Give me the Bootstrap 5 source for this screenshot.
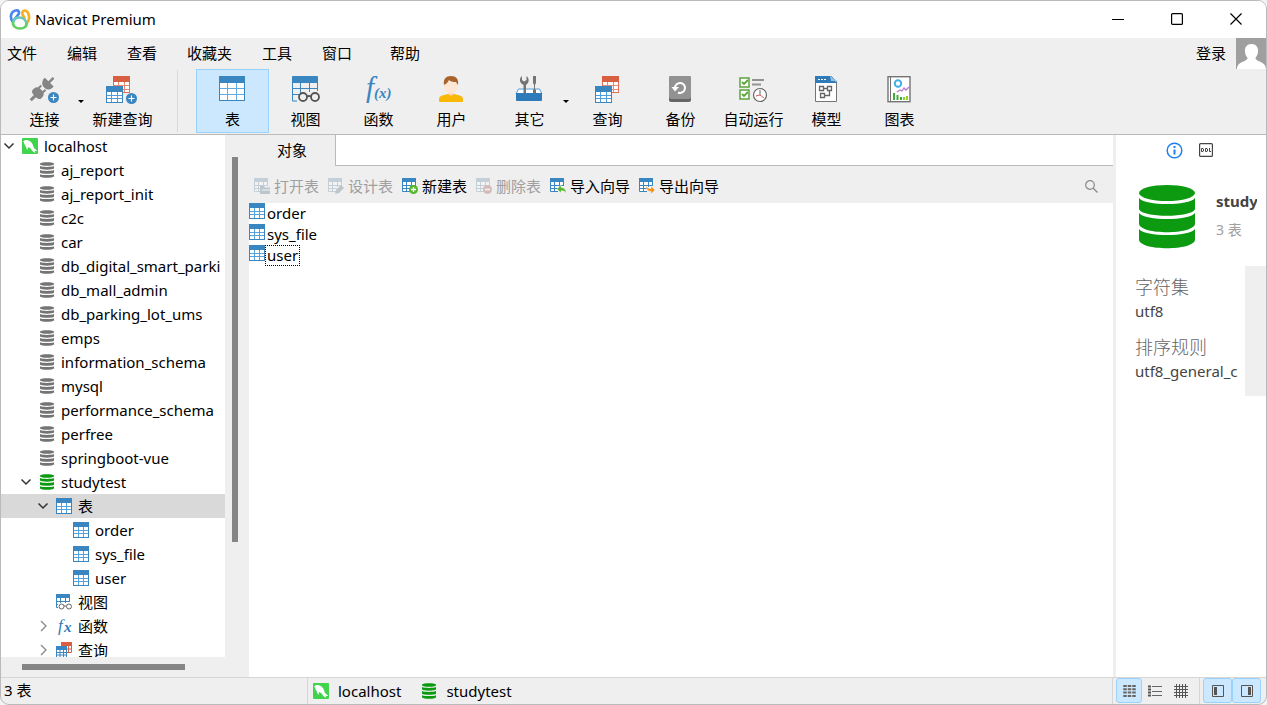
<!DOCTYPE html>
<html lang="zh-CN">
<head>
<meta charset="utf-8">
<meta name="viewport" content="width=device-width, initial-scale=1">
<title>Navicat Premium</title>
<link href="https://cdn.jsdelivr.net/npm/bootstrap@5.3.0/dist/css/bootstrap.min.css" rel="stylesheet">
<style>
  :root { --chrome: #efefef; --line: #bababa; --soft: #d6d6d6; --pick: #cce8ff; --pick-line: #99d1ff; --thumb: #858585; }
  body { font: 15px/24px "Noto Sans", "Noto Sans CJK SC", sans-serif; color: #000; background: #f3f3f3; }
  svg { display: block; flex: none; }
  a { color: inherit; text-decoration: none; }
  button { border: 0; background: none; padding: 0; color: inherit; font: inherit; line-height: inherit; }
  .window { border: 1px solid var(--line); border-radius: 9px; background: var(--chrome); }
  .titlebar { height: 37px; background: #fff; padding: 0 1px 1px 8px; }
  .brand { gap: 4px; }
  .caption-btn { width: 59px; }
  .menubar { height: 31px; padding-left: 6px; }
  .menu-items { gap: 30px; }
  .menubar a { padding-bottom: 2px; }
  .avatar { width: 30px; height: 31px; background: #9f9f9f; }
  .login { margin-right: 10px; }
  .tools { height: 66px; border-bottom: 1px solid var(--line); }
  .tool { width: 73px; height: 64px; padding-top: 6px; border: 1px solid transparent; display: flex; flex-direction: column; align-items: center; gap: 3px; line-height: 24px; white-space: nowrap; }
  .tool svg { margin-right: 1px; overflow: visible; }
  .tool.active { background: var(--pick); border-color: var(--pick-line); }
  .tool.with-menu { width: 83px; position: relative; }
  .tool.with-menu::after { content: ""; position: absolute; right: 1px; top: 30px; border: 3px solid transparent; border-top-color: #000; border-bottom: 0; }
  .tool-first { margin-left: 2px; }
  .tool-rule { width: 1px; margin: 1px 18px 2px; background: #d8d8d8; }
  .work, .work-row { min-height: 0; }
  .pane { min-width: 0; }
  .side { width: 248px; }
  .tree { background: #fff; width: 224px; }
  .tree-rows { margin-top: -1px; }
  .node { height: 24px; padding-left: calc(var(--depth) * 17px); white-space: nowrap; }
  .node.active { background: #d9d9d9; }
  .twist { width: 21px; padding-left: 2px; flex: none; }
  .node .glyph { margin-right: 6px; overflow: visible; }
  .v-track { padding: 22px 0 0 7px; width: 24px; }
  .v-thumb { width: 6px; background: var(--thumb); height: 77%; }
  .h-track { height: 20px; padding: 7px 0 0 21px; }
  .h-thumb { width: 163px; height: 6px; background: var(--thumb); }
  .tabs { height: 31px; }
  .tab { width: 86px; line-height: 31px; }
  .tab-rest { background: #fff; border-left: 1px solid var(--line); border-bottom: 1px solid var(--line); }
  .actions { height: 37px; padding: 3px 14px 0 5px; gap: 9px; }
  .action { gap: 4px; white-space: nowrap; }
  .action:disabled { color: #a0a0a0; }
  .action:disabled svg { filter: saturate(.5); opacity: .28; }
  .objects { background: #fff; }
  .object { height: 21px; line-height: 21px; }
  .object .name { padding: 0 1px; border: 1px solid transparent; line-height: 19px; }
  .object .name.focused { border: 1px dotted #000; }
  .info { width: 153px; background: #fff; border-left: 3px solid var(--chrome); }
  .info-tabs { padding: 7px 0 0 50px; gap: 16px; height: 31px; }
  .info-head { padding: 19px 9px 0 23px; gap: 21px; height: 100px; }
  .info-text { min-width: 0; padding-top: 4px; }
  .info-name { font-weight: 700; color: #444; }
  .info-count { color: #a0a0a0; font-size: 14px; padding-top: 5px; }
  .props { min-width: 0; padding: 7px 9px 0 19px; color: #444; }
  .props dt { font: 300 18px/26px "Noto Sans CJK SC", sans-serif; color: #666; }
  .props dd { margin-bottom: 10px; }
  .props-bar { width: 21px; height: 130px; background: var(--chrome); }
  .status { height: 27px; border-top: 1px solid var(--soft); }
  .status-count { width: 307px; padding-left: 3px; border-right: 1px solid var(--soft); }
  .status-items { padding-left: 5px; gap: 20px; }
  .status-item { gap: 9px; }
  .status-end { border-left: 1px solid var(--soft); padding-left: 3px; }
  .view-btn { width: 26px; height: 25px; display: flex; align-items: center; justify-content: center; border: 1px solid transparent; border-radius: 3px; }
  .view-btn.wide { width: 29px; }
  .view-btn.active { background: var(--pick); border-color: var(--pick-line); }
  .pane-btns { border-left: 1px solid var(--soft); margin-left: 5px; padding: 0 5px 0 3px; }
</style>
</head>
<body>
<svg width="0" height="0" class="position-absolute">
  <symbol id="table" viewBox="0 0 26 25">
    <rect x=".5" y=".5" width="25" height="24" fill="#fff" stroke="#3a86c0"/>
    <path d="M1 12.500h24M1 18.500h24M8.500 6v18M17.500 6v18" stroke="#62aadf" fill="none"/>
    <path d="M0 1q0-1 1-1h24q1 0 1 1v6H0z" fill="#3a86c0"/>
  </symbol>
  <symbol id="table-sm" viewBox="0 0 16 16">
    <rect x=".5" y=".5" width="15" height="15" fill="#fff" stroke="#3a86c0"/>
    <path d="M1 8.500h14M1 11.500h14M5.500 5v10M10.500 5v10" stroke="#55a2dc" fill="none"/>
    <path d="M0 0h16v5H0z" fill="#3a86c0"/>
  </symbol>
  <symbol id="table-cut" viewBox="0 0 16 16">
    <path d="M.5.5h13v13H.5z" fill="#fff"/>
    <path d="M.5 3v10.500H8M4.500 4v10M9.500 4v5M1 7.500h13M1 10.500h8M13.500 4v4" stroke="#3a86c0" fill="none"/>
    <path d="M0 0h14v4H0z" fill="#3a86c0"/>
  </symbol>
  <symbol id="db" viewBox="0 0 16 16">
    <path d="M1 1.500C2.500-.2 13.500-.2 15 1.500v1c-1.500 1.700-12.500 1.700-14 0zM1 4c3 1.200 11 1.200 14 0v2.600c-1.500 1.500-12.500 1.500-14 0zM1 8.100c3 1.200 11 1.200 14 0v2.600c-1.500 1.500-12.500 1.500-14 0zM1 12.200c3 1.200 11 1.200 14 0v2.300c-1.500 1.800-12.500 1.800-14 0z" fill="currentColor"/>
  </symbol>
  <symbol id="host" viewBox="0 0 16 16">
    <rect width="16" height="16" rx="1" fill="#3fd44c"/>
    <path d="M2.500 2.500c2-1 5 0 6.500 1.500 2 1.800 2.200 4 3 6l3.500 3-3-.3 1 2c-2-.5-3.500-1.700-4.500-3.700C8.300 10 7 9.500 6 9l-.5 3C4 10.500 4.200 8.500 3 7 2 6 2.500 4.500 1 3.500z" fill="#fff"/>
  </symbol>
  <symbol id="down" viewBox="0 0 12 12"><path d="M1.500 3.500 6 8l4.500-4.500" fill="none" stroke="#333" stroke-width="1.500"/></symbol>
  <symbol id="right" viewBox="0 0 12 12"><path d="M4 1l5 5-5 5" fill="none" stroke="#888" stroke-width="1.300"/></symbol>
  <symbol id="query" viewBox="0 0 26 28">
    <rect x="7.500" y=".5" width="16" height="16" fill="#fff" stroke="#e07058"/>
    <path d="M8 9.500h15M8 13.500h15M12.500 6v10M18.500 6v10" stroke="#e58b75" fill="none"/>
    <path d="M7 0h17v6H7z" fill="#d95f43"/>
    <rect x=".5" y="11.500" width="16" height="15" fill="#fff" stroke="#3a86c0"/>
    <path d="M1 19.500h15M1 22.500h15M5.500 16v10M11.500 16v10" stroke="#4f9edb" fill="none"/>
    <path d="M0 10h17v6H0z" fill="#3a86c0"/>
  </symbol>
  <symbol id="query-sm" viewBox="0 0 16 16">
    <path d="M5.500.5h10v10h-10z" fill="#fff" stroke="#d95f43"/>
    <path d="M5 0h11v4H5zM11 6.500h5v1h-5z" fill="#d95f43"/><path d="M12.500 4v6" stroke="#d95f43"/>
    <path d="M.5 5.500h10v10H.5z" fill="#fff" stroke="#3a86c0"/>
    <path d="M0 4h11v4H0z" fill="#3a86c0"/><path d="M1 10.500h9M1 13h9M4 8v7M7.500 8v7" stroke="#3a86c0"/>
  </symbol>
  <symbol id="plus" viewBox="0 0 11 11">
    <circle cx="5.500" cy="5.500" r="5.500" fill="#3a86c0"/><path d="M5.500 2.500v6M2.500 5.500h6" stroke="#fff" stroke-width="1.200"/>
  </symbol>
</svg>

<div class="window vh-100 d-flex flex-column overflow-hidden">
  <header class="titlebar d-flex align-items-stretch flex-shrink-0">
    <div class="brand d-flex align-items-center flex-grow-1">
      <svg width="22" height="22" viewBox="0 0 22 22" fill="none" stroke-width="2.600" stroke-linecap="round">
        <path d="M3.500 13.500C.5 9 2 3.500 6.500 2.500c4-.8 4.500 2.500 2 5L5 12" stroke="#4a86f0"/>
        <path d="M17.500 15.500c3.500-3 3.500-9.500 0-12.500-3-1-5 .5-4 3.500l2 3.500" stroke="#f6b022"/>
        <path d="M4.500 13C2.500 18 7 20.500 11 20.500s8-2 6-7" stroke="#62cf62"/>
        <path d="M4.500 13c1.500-4.500 9.500-5 12.500.5" stroke="#6cc6c0"/>
      </svg>
      <span>Navicat Premium</span>
    </div>
    <button class="caption-btn d-flex align-items-center justify-content-center" aria-label="最小化"><svg width="12" height="12"><path d="M0 6.500h12" stroke="#000"/></svg></button>
    <button class="caption-btn d-flex align-items-center justify-content-center" aria-label="最大化"><svg width="12" height="12"><rect x=".6" y=".6" width="10.800" height="10.800" rx="1" fill="none" stroke="#000" stroke-width="1.200"/></svg></button>
    <button class="caption-btn d-flex align-items-center justify-content-center" aria-label="关闭"><svg width="12" height="12"><path d="M.5.5l11 11M11.500.5l-11 11" stroke="#000" stroke-width="1.200"/></svg></button>
  </header>

  <nav class="menubar d-flex align-items-center flex-shrink-0">
    <div class="menu-items d-flex flex-grow-1">
      <a href="#">文件</a><a href="#">编辑</a><a href="#">查看</a><a href="#">收藏夹</a><a href="#">工具</a><a href="#">窗口</a><a href="#" class="ms-2">帮助</a>
    </div>
    <a href="#" class="login">登录</a>
    <svg class="avatar" viewBox="0 0 30 31"><path d="M15.500 6c4.500 0 7 3 6.500 8-.3 3-1.500 4.500-2.500 6 0 4 10.500 3 10.500 11H1c0-8 10.500-7 10.500-11-1-1.500-2.300-3-2.500-6-.5-5 2-8 6.500-8z" fill="#fff"/></svg>
  </nav>

  <div class="tools d-flex flex-shrink-0" role="toolbar">
    <button class="tool with-menu tool-first">
      <svg width="32" height="28" viewBox="0 0 32 28"><g fill="#858585" transform="rotate(45 14 13)"><path d="M13-3h2.500v6H13zM8 3h12.500v2q-1 5.500-6 5.500T8 5zM8 19c0-4 2-5 6-5s6 1 6 5v2q-1 2-4.500 2v6h-3v-6Q9 23 8 21zM10 11h2v4h-2zM16 11h2v4h-2z"/></g><use href="#plus" x="20" y="16" width="11" height="11"/></svg>
      <span>连接</span></button>
    <button class="tool">
      <svg width="32" height="28"><use href="#query" width="26" height="28"/><use href="#plus" x="20" y="17" width="11" height="11"/></svg>
      <span>新建查询</span></button>
    <div class="tool-rule"></div>
    <button class="tool active"><svg width="26" height="28"><use href="#table" width="26" height="25"/></svg><span>表</span></button>
    <button class="tool"><svg width="28" height="28"><path d="M1.500 3v22H6M1 12.500h26M1 18.500h8M9.500 6v12M18.500 6v10M26.500 3v12" stroke="#3a86c0" fill="none"/><path d="M1 1q0-1 1-1h24q1 0 1 1v6H1z" fill="#3a86c0"/><g fill="#efefef" stroke="#555" stroke-width="1.800"><circle cx="12" cy="21" r="4"/><circle cx="24" cy="21" r="4"/><path d="M16 20.500q2-1 4 0"/></g></svg><span>视图</span></button>
    <button class="tool"><svg width="28" height="28" fill="#3a86c0" font-family="Liberation Serif" font-style="italic"><text x="2" y="21" font-size="29">f</text><text x="10" y="22" font-size="15" font-weight="bold">(x)</text></svg><span>函数</span></button>
    <button class="tool"><svg width="26" height="28"><path d="M10 13h6v5c3 1 9 1 9 5v2q0 1-1 1H2q-1 0-1-1v-2c0-4 6-4 9-5z" fill="#f8b804"/><path d="M10 13h6v5q-3 3-6 0z" fill="#fbd7bd"/><ellipse cx="13" cy="9.500" rx="7" ry="8" fill="#fde6d3"/><path d="M6 9C5 3 8 0 13 0s8 3 7 9l-2-3q-5 0-7-2-1 3-5 5z" fill="#a8642b"/></svg><span>用户</span></button>
    <button class="tool with-menu"><svg width="28" height="28"><path d="M3.500 13h21l2.500 5H1z" fill="#fff" stroke="#4f9edb"/><path d="M8.500 9C4 7 4 2 7 0v4l2 1.500L11.500 4V0c3 2 3 7-.5 9v9H8.500z" fill="#747474"/><path d="M18 0h3v7l-1 2v4l1 1v4h-3v-4l1-1V9l-1-2z" fill="#747474"/><path d="M1 17h26v7q0 1-1 1H2q-1 0-1-1z" fill="#2f7bb9"/></svg><span>其它</span></button>
    <button class="tool"><svg width="24" height="28"><use href="#query" width="26" height="28"/></svg><span>查询</span></button>
    <button class="tool"><svg width="22" height="28"><rect width="22" height="26" rx="2" fill="#666"/><rect width="22" height="23" rx="2" fill="#929292"/><path d="M6 12a5 5 0 1 1 3 4.500" fill="none" stroke="#fff" stroke-width="2"/><path d="M2.500 11h7.500l-4 4.500z" fill="#fff"/></svg><span>备份</span></button>
    <button class="tool"><svg width="28" height="28" fill="none"><path d="M1 2h9v9H1zM1 14h9v9H1z" fill="#fff" stroke="#5ea43c" stroke-width="1.500"/><path d="M3 6l2 2 4-4M3 18l2 2 4-4" stroke="#5ea43c" stroke-width="1.800"/><path d="M13 4h12M13 8.500h9" stroke="#929292" stroke-width="2"/><circle cx="21" cy="19" r="6.500" fill="#fff" stroke="#666" stroke-width="1.200"/><path d="M21 19l4 3M21 19l-4 1" stroke="#d65b50"/><path d="M21 14v5" stroke="#666"/></svg><span>自动运行</span></button>
    <button class="tool"><svg width="22" height="28"><path d="M.5.5h16l5 5v20H.5z" fill="#fff" stroke="#747474"/><path d="M0 0h15l7 7H0z" fill="#2f7bb9"/><path d="M15 0l7 5h-6z" fill="#8fc3ea"/><path d="M3 3.500h2M6 3.500h2M9 3.500h2" stroke="#fff"/><path d="M4.500 10.500h4v4h-4zM12.500 10.500h4v4h-4zM5.500 17.500h4v4h-4zM8.500 12.500h4M14.500 15v4.500h-5" fill="none" stroke="#666" stroke-width="1.300"/></svg><span>模型</span></button>
    <button class="tool"><svg width="24" height="28" fill="none"><rect x="1" y=".7" width="22" height="25" fill="#fff" stroke="#747474" stroke-width="1.400"/><path d="M3.500 1v24" stroke="#747474"/><circle cx="11" cy="7.500" r="3.200" stroke="#42b0e4" stroke-width="2"/><path d="M10 16l3-2 2 1 2-3 2 2 3-3" stroke="#b878d0" stroke-width="1.300"/><path d="M7 17v7M10.500 19v5M14 21v3" stroke="#3eac3d" stroke-width="2"/><path d="M17 21v3M20 20v4" stroke="#8cd42e" stroke-width="2"/></svg><span>图表</span></button>
  </div>

  <div class="work d-flex flex-grow-1">
    <aside class="side d-flex flex-column flex-shrink-0">
      <div class="work-row d-flex flex-grow-1">
        <div class="tree overflow-hidden"><div class="tree-rows" id="tree" role="tree"></div></div>
        <div class="v-track"><div class="v-thumb"></div></div>
      </div>
      <div class="h-track"><div class="h-thumb"></div></div>
    </aside>

    <main class="pane d-flex flex-column flex-grow-1">
      <div class="tabs d-flex"><button class="tab">对象</button><div class="tab-rest flex-grow-1"></div></div>
      <div class="actions d-flex align-items-center">
        <button class="action d-flex align-items-center" disabled><svg width="16" height="16"><use href="#table-cut" width="16" height="16"/><path d="M6 8h4l1 1.500h5V16H6z" fill="#26638f"/><path d="M8 12h8" stroke="#fff"/></svg>打开表</button>
        <button class="action d-flex align-items-center" disabled><svg width="16" height="16"><use href="#table-cut" width="16" height="16"/><path d="M7 16l1-4 5-5 3 3-5 5z" fill="#26638f"/></svg>设计表</button>
        <button class="action d-flex align-items-center"><svg width="16" height="16"><use href="#table-cut" width="16" height="16"/><circle cx="11.500" cy="11.500" r="4.500" fill="#54b82b"/><path d="M11.500 9v5M9 11.500h5" stroke="#fff" stroke-width="1.400"/></svg>新建表</button>
        <button class="action d-flex align-items-center" disabled><svg width="16" height="16"><use href="#table-cut" width="16" height="16"/><circle cx="11.500" cy="11.500" r="4.500" fill="#e02020"/><path d="M9 11.500h5" stroke="#fff" stroke-width="1.600"/></svg>删除表</button>
        <button class="action d-flex align-items-center"><svg width="16" height="16"><use href="#table-cut" width="16" height="16"/><path d="M7 11l4-4v2.500c3 0 5 2 5 5.500-1.500-2-3-2.200-5-2.200V15z" fill="#54b82b" stroke="#efefef" stroke-width=".5"/></svg>导入向导</button>
        <button class="action d-flex align-items-center"><svg width="16" height="16"><use href="#table-cut" width="16" height="16"/><path d="M16 12l-4 4v-2.500c-3 0-5-2-5-5.500 1.500 2 3 2.500 5 2.500V8z" fill="#f7941d" stroke="#efefef" stroke-width=".5"/></svg>导出向导</button>
        <button class="ms-auto" aria-label="搜索"><svg width="14" height="13"><circle cx="5" cy="5" r="4.300" fill="none" stroke="#888" stroke-width="1.200"/><path d="M8 8l4.500 4.500" stroke="#888" stroke-width="1.200"/></svg></button>
      </div>
      <div class="objects flex-grow-1" id="objects"></div>
    </main>

    <aside class="info flex-shrink-0">
      <div class="info-tabs d-flex">
        <button aria-label="信息" class="d-flex"><svg width="17" height="17"><circle cx="8.500" cy="8.500" r="7.300" fill="none" stroke="#1e80f0" stroke-width="1.500"/><path d="M7.500 7.500h2v5h-2zM7.500 4h2v2h-2z" fill="#1e80f0"/></svg></button>
        <button aria-label="DDL" class="d-flex"><svg width="14" height="16"><rect x=".6" y="1.600" width="12.800" height="12.800" rx="1" fill="none" stroke="#444" stroke-width="1.200"/><path d="M2.500 6.500H4l.5.5v2l-.5.5H2.500zM6.500 6.500H8l.5.5v2l-.5.5H6.500zM10.500 6v3.500H12" fill="none" stroke="#444"/></svg></button>
      </div>
      <div class="info-head d-flex">
        <svg width="56" height="64" viewBox="0 0 56 64" fill="#0c9a10"><ellipse cx="28" cy="8" rx="28" ry="8"/><path d="M0 13c6 8 50 8 56 0v11c-2 9-54 9-56 0zM0 28c6 8 50 8 56 0v11c-2 11-54 11-56 0zM0 44c6 8 50 8 56 0v11c-2 11-54 11-56 0z"/></svg>
        <div class="info-text overflow-hidden text-nowrap"><div class="info-name">study</div><div class="info-count">3 表</div></div>
      </div>
      <div class="d-flex">
        <dl class="props flex-grow-1 mb-0 text-nowrap"><dt>字符集</dt><dd>utf8</dd><dt>排序规则</dt><dd>utf8_general_c</dd></dl>
        <div class="props-bar flex-shrink-0"></div>
      </div>
    </aside>
  </div>

  <footer class="status d-flex align-items-stretch flex-shrink-0">
    <div class="status-count">3 表</div>
    <div class="status-items d-flex flex-grow-1">
      <span class="status-item d-flex align-items-center"><svg width="16" height="16"><use href="#host"/></svg>localhost</span>
      <span class="status-item d-flex align-items-center"><svg width="16" height="16" color="#0c9a10"><use href="#db"/></svg>studytest</span>
    </div>
    <div class="status-end d-flex">
      <button class="view-btn active" aria-label="列表"><svg width="13" height="12"><path d="M2 0v12M6.500 0v12M11 0v12" stroke="#666" stroke-width="3.500" stroke-dasharray="2 1.300"/></svg></button>
      <button class="view-btn" aria-label="详细信息"><svg width="14" height="12"><path d="M0 1.500h3M0 4.500h3M0 7.500h3M0 10.500h3" stroke="#555" stroke-width="2"/><path d="M4 1.500h10M4 6.500h10M4 10.500h10" stroke="#666" /></svg></button>
      <button class="view-btn" aria-label="ER 图表"><svg width="14" height="14"><path d="M2.500 0v14M5.500 0v14M8.500 0v14M11.500 0v14M0 2.500h14M0 5.500h14M0 8.500h14M0 11.500h14" stroke="#555"/></svg></button>
      <div class="pane-btns d-flex">
        <button class="view-btn wide active" aria-label="左窗格"><svg width="12" height="12"><path d="M.5.5h11v11H.5z" fill="none" stroke="#555"/><path d="M2 2h3v8H2z" fill="#555"/></svg></button>
        <button class="view-btn wide active" aria-label="右窗格"><svg width="12" height="12"><path d="M.5.5h11v11H.5z" fill="none" stroke="#555"/><path d="M7 2h3v8H7z" fill="#555"/></svg></button>
      </div>
    </div>
  </footer>
</div>

<script src="https://cdn.jsdelivr.net/npm/bootstrap@5.3.0/dist/js/bootstrap.bundle.min.js"></script>
<script>
  const use = (id, color) => `<svg class="glyph" width="16" height="16" color="${color || '#747474'}"><use href="#${id}"/></svg>`;
  const view = `<svg class="glyph" width="16" height="16"><use href="#table-cut"/><path d="M2 9h14v7H2z" fill="#fff"/><g fill="#fff" stroke="#666"><circle cx="5.500" cy="12.500" r="2.500"/><circle cx="13" cy="12.500" r="2.500"/><path d="M8 12h2.500"/></g></svg>`;
  const fx = `<svg class="glyph" width="16" height="18" fill="#2f7bb9" font-family="Liberation Serif" font-style="italic"><text x="2" y="14" font-size="17">f</text><text x="8" y="15" font-size="15" font-weight="bold">x</text></svg>`;
  const green = '#0c9a10';
  const dbs = ['aj_report', 'aj_report_init', 'c2c', 'car', 'db_digital_smart_parki', 'db_mall_admin', 'db_parking_lot_ums', 'emps', 'information_schema', 'mysql', 'performance_schema', 'perfree', 'springboot-vue'];
  const tables = ['order', 'sys_file', 'user'];
  const nodes = [
    [0, 'down', use('host'), 'localhost'],
    ...dbs.map(n => [1, '', use('db'), n]),
    [1, 'down', use('db', green), 'studytest'],
    [2, 'down', use('table-sm'), '表', true],
    ...tables.map(n => [3, '', use('table-sm'), n]),
    [2, '', view, '视图'],
    [2, 'right', fx, '函数'],
    [2, 'right', use('query-sm'), '查询']
  ];
  document.getElementById('tree').innerHTML = nodes.map(([d, t, icon, name, on]) =>
    `<div class="node d-flex align-items-center${on ? ' active' : ''}" role="treeitem" style="--depth:${d}"><span class="twist">${t ? `<svg width="12" height="12"><use href="#${t}"/></svg>` : ''}</span>${icon}<span>${name}</span></div>`).join('');
  document.getElementById('objects').innerHTML = tables.map(n =>
    `<div class="object d-flex"><svg width="16" height="16"><use href="#table-sm"/></svg><span class="name${n === 'user' ? ' focused' : ''}">${n}</span></div>`).join('');
</script>
</body>
</html>
